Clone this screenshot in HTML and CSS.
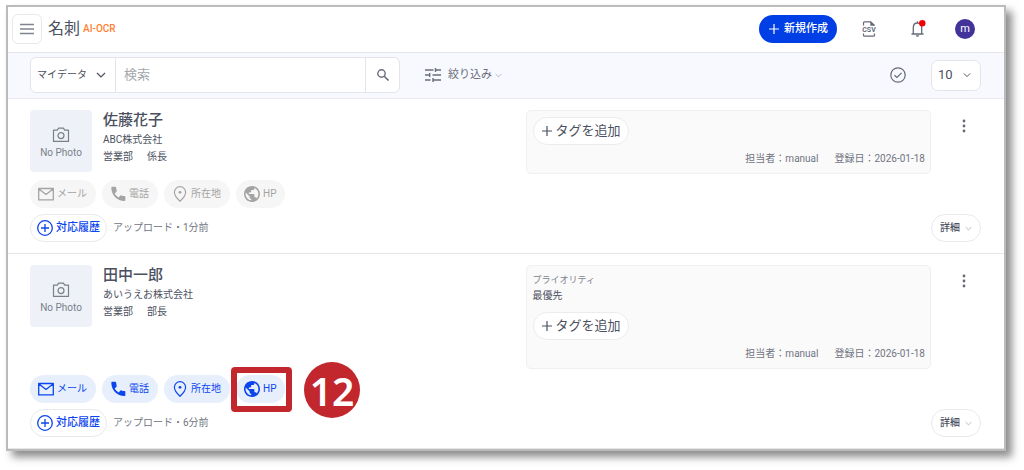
FILE: index.html
```
<!DOCTYPE html>
<html lang="ja">

<head>
    <meta charset="UTF-8">
    <meta name="viewport" content="width=device-width, initial-scale=1.0">
    <title>名刺 AI-OCR</title>
    <link rel="stylesheet" href="styles.css">
</head>

<body>
    <!-- アイコン定義 -->
    <svg class="defs" width="0" height="0" aria-hidden="true">
        <symbol id="chevron" viewBox="0 0 10 10">
            <path d="M1 3l4 4 4-4" fill="none" stroke="currentColor" stroke-width="1.2" />
        </symbol>
        <symbol id="plus" viewBox="0 0 12 12">
            <path d="M6 1v10M1 6h10" fill="none" stroke="currentColor" stroke-width="1.2" />
        </symbol>
        <symbol id="camera" viewBox="0 0 18 18">
            <path d="M1.5 4.2h3.8l1.3-2h4.8l1.3 2h3.8v11.2h-15z" fill="none" stroke="currentColor" stroke-width="1.2" stroke-linejoin="round" />
            <circle cx="9" cy="9.6" r="3" fill="none" stroke="currentColor" stroke-width="1.2" />
        </symbol>
        <symbol id="mail" viewBox="0 0 16 16">
            <path d="M.7 2.5h14.6v11.4H.7zM1 3l7 5.4L15 3" fill="none" stroke="currentColor" stroke-width="1.3" stroke-linejoin="round" />
        </symbol>
        <symbol id="phone" viewBox="0 0 24 24">
            <path d="M2 2.5C2 1.7 2.6 1 3.4 1h4.4c.8 0 1.4.6 1.4 1.4 0 1.7.3 3.2.8 4.7.1.5 0 1-.3 1.4L7.1 11.3c1.4 2.5 3.3 4.4 5.8 5.8l2.8-2.7c.4-.4.9-.5 1.400-.3 1.500.5 3 .8 4.600.8.800 0 1.300.6 1.300 1.400v4.900c0 .8-.6 1.400-1.400 1.400C10.800 22.600 2 13.400 2 2.500z" fill="currentColor" />
        </symbol>
        <symbol id="pin" viewBox="0 0 16 16">
            <path d="M8 .7a5.600 5.600 0 0 0-5.600 5.600C2.400 10.200 8 15.300 8 15.300s5.600-5.100 5.600-9A5.600 5.600 0 0 0 8 .7z" fill="none" stroke="currentColor" stroke-width="1.2" />
            <circle cx="8" cy="6.300" r="1.400" fill="currentColor" />
        </symbol>
        <symbol id="globe" viewBox="2 2 20 20">
            <path d="M12 2C6.480 2 2 6.480 2 12s4.480 10 10 10 10-4.480 10-10S17.520 2 12 2zm-1 17.930c-3.950-.49-7-3.850-7-7.930 0-.62.08-1.210.21-1.790L9 15v1c0 1.100.9 2 2 2v1.930zm6.900-2.540c-.26-.81-1-1.390-1.900-1.390h-1v-3c0-.55-.45-1-1-1H8v-2h2c.55 0 1-.45 1-1V7h2c1.100 0 2-.9 2-2v-.41c2.930 1.190 5 4.060 5 7.410 0 2.080-.8 3.970-2.100 5.390z" fill="currentColor" />
        </symbol>
        <symbol id="add-circle" viewBox="0 0 16 16">
            <circle cx="8" cy="8" r="7.3" fill="none" stroke="currentColor" stroke-width="1.3" />
            <path d="M8 4v8M4 8h8" fill="none" stroke="currentColor" stroke-width="1.3" />
        </symbol>
        <symbol id="dots" viewBox="0 0 4 14">
            <circle cx="2" cy="2" r="1.4" fill="currentColor" />
            <circle cx="2" cy="7" r="1.4" fill="currentColor" />
            <circle cx="2" cy="12" r="1.4" fill="currentColor" />
        </symbol>
    </svg>

    <div class="window">
        <header class="header">
            <button class="menu" type="button" aria-label="メニュー">
                <svg width="14" height="12" viewBox="0 0 14 12"><path d="M0 1.500h14M0 6h14M0 10.500h14" stroke="currentColor" stroke-width="1.400" /></svg>
            </button>
            <h1 class="title">名刺</h1>
            <span class="ocr">AI-OCR</span>
            <div class="actions">
                <button class="create" type="button"><svg width="12" height="12"><use href="#plus" /></svg>新規作成</button>
                <button class="icon-btn" type="button" aria-label="CSV">
                    <svg width="14" height="16" viewBox="0 0 14 16">
                        <path d="M1.500 4.500V1.800Q1.500.8 2.500.8H8.700L12.500 4.500M1.500 12.500v1.700q0 1 1 1h9q1 0 1-1V12.500" fill="none" stroke="currentColor" stroke-width="1.200" />
                        <path d="M8.300.3v4.500h4.600z" fill="currentColor" />
                        <text class="csv-text" x="7" y="11" text-anchor="middle" fill="currentColor">CSV</text>
                    </svg>
                </button>
                <button class="icon-btn" type="button" aria-label="お知らせ">
                    <svg width="16" height="18" viewBox="0 0 16 18">
                        <path d="M1.500 14h12M3.300 14V7.500C3.300 4.800 5 3 7.500 3s4.200 1.800 4.200 4.500V14M7.500 3V1.300" fill="none" stroke="currentColor" stroke-width="1.300" />
                        <path d="M5.800 15.300h3.400q-.3 1.500-1.700 1.500t-1.700-1.500z" fill="currentColor" />
                        <circle cx="12.300" cy="3.300" r="3.200" fill="#f50000" />
                    </svg>
                </button>
                <button class="avatar" type="button">m</button>
            </div>
        </header>

        <form class="toolbar">
            <div class="search">
                <div class="select scope">
                    <select aria-label="検索対象">
                        <option>マイデータ</option>
                    </select>
                    <svg width="10" height="10"><use href="#chevron" /></svg>
                </div>
                <input type="text" placeholder="検索" aria-label="検索">
                <button type="button" aria-label="検索する">
                    <svg width="12" height="12" viewBox="0 0 12 12"><circle cx="4.500" cy="4.500" r="3.700" fill="none" stroke="currentColor" stroke-width="1.400" /><path d="M7.200 7.200l4.300 4.300" stroke="currentColor" stroke-width="1.600" /></svg>
                </button>
            </div>
            <button class="filter" type="button">
                <svg width="16" height="14" viewBox="0 0 16 14"><path d="M0 2h8.500M10.500 2H16M10.500 0v4M0 7h4.700M7.500 7H16M4.700 5v4M0 12h5.500M8 12h8M8 10v4" stroke="currentColor" stroke-width="1.400" /></svg>
                絞り込み
                <svg class="pale" width="7" height="7"><use href="#chevron" /></svg>
            </button>
            <button class="check" type="button" aria-label="選択">
                <svg width="16" height="16" viewBox="0 0 16 16"><circle cx="8" cy="8" r="7.200" fill="none" stroke="currentColor" stroke-width="1.200" /><path d="M4.500 8.200l2.400 2.300 4.700-4.700" fill="none" stroke="currentColor" stroke-width="1.200" /></svg>
            </button>
            <div class="select count">
                <select aria-label="表示件数">
                    <option>10</option>
                </select>
                <svg width="8" height="8"><use href="#chevron" /></svg>
            </div>
        </form>

        <main>
            <article class="card">
                <div class="card-top">
                    <div class="person">
                        <div class="photo"><svg width="18" height="18"><use href="#camera" /></svg>No Photo</div>
                        <div>
                            <h2 class="name">佐藤花子</h2>
                            <p>ABC株式会社</p>
                            <p><span class="dept">営業部</span>係長</p>
                        </div>
                    </div>
                    <div class="info">
                        <button class="tag" type="button"><svg width="12" height="12"><use href="#plus" /></svg>タグを追加</button>
                        <div class="meta"><span>担当者：manual</span><span>登録日：2026-01-18</span></div>
                    </div>
                    <button class="more" type="button" aria-label="その他"><svg width="4" height="14"><use href="#dots" /></svg></button>
                </div>
                <div class="links">
                    <button class="pill" type="button" disabled><svg width="16" height="16"><use href="#mail" /></svg>メール</button>
                    <button class="pill" type="button" disabled><svg width="16" height="16"><use href="#phone" /></svg>電話</button>
                    <button class="pill" type="button" disabled><svg width="16" height="16"><use href="#pin" /></svg>所在地</button>
                    <button class="pill" type="button" disabled><svg width="16" height="16"><use href="#globe" /></svg>HP</button>
                </div>
                <div class="card-bottom">
                    <button class="history" type="button"><svg width="16" height="16"><use href="#add-circle" /></svg>対応履歴</button>
                    <span class="upload">アップロード・1分前</span>
                    <button class="detail" type="button">詳細<svg class="pale" width="7" height="7"><use href="#chevron" /></svg></button>
                </div>
            </article>

            <article class="card">
                <div class="card-top">
                    <div class="person">
                        <div class="photo"><svg width="18" height="18"><use href="#camera" /></svg>No Photo</div>
                        <div>
                            <h2 class="name">田中一郎</h2>
                            <p>あいうえお株式会社</p>
                            <p><span class="dept">営業部</span>部長</p>
                        </div>
                    </div>
                    <div class="info">
                        <dl class="priority">
                            <dt>プライオリティ</dt>
                            <dd>最優先</dd>
                        </dl>
                        <button class="tag" type="button"><svg width="12" height="12"><use href="#plus" /></svg>タグを追加</button>
                        <div class="meta"><span>担当者：manual</span><span>登録日：2026-01-18</span></div>
                    </div>
                    <button class="more" type="button" aria-label="その他"><svg width="4" height="14"><use href="#dots" /></svg></button>
                </div>
                <div class="links">
                    <a class="pill" href="#mail"><svg width="16" height="16"><use href="#mail" /></svg>メール</a>
                    <a class="pill" href="#phone"><svg width="16" height="16"><use href="#phone" /></svg>電話</a>
                    <a class="pill" href="#pin"><svg width="16" height="16"><use href="#pin" /></svg>所在地</a>
                    <div class="callout">
                        <a class="pill" href="#globe"><svg width="16" height="16"><use href="#globe" /></svg>HP</a>
                        <span class="frame"></span>
                        <span class="step">12</span>
                    </div>
                </div>
                <div class="card-bottom">
                    <button class="history" type="button"><svg width="16" height="16"><use href="#add-circle" /></svg>対応履歴</button>
                    <span class="upload">アップロード・6分前</span>
                    <button class="detail" type="button">詳細<svg class="pale" width="7" height="7"><use href="#chevron" /></svg></button>
                </div>
            </article>
        </main>
    </div>
</body>

</html>
```
FILE: styles.css
```
* {
    box-sizing: border-box;
}

body {
    margin: 0;
    background: #fff;
    color: #4b5060;
    font-family: Roboto, "Noto Sans CJK JP", sans-serif;
    font-size: 10px;
    line-height: 16px;
}

h1, h2, p, dl, dd {
    margin: 0;
}

button, input, select {
    margin: 0;
    padding: 0;
    border: 0;
    background: none;
    color: inherit;
    font: inherit;
}

svg {
    display: block;
    flex: none;
}

.defs {
    position: absolute;
}

.window {
    margin: 5px 18px 18px 6px;
    border: 2px solid #bbb;
    background: #fff;
    box-shadow: 6px 6px 8px rgba(0, 0, 0, 0.45);
}

/* ヘッダー */
.header {
    display: flex;
    align-items: center;
    padding: 7px 29px 8px 4px;
    border-bottom: 1px solid #e6e7eb;
}

.menu {
    display: grid;
    place-items: center;
    width: 30px;
    height: 30px;
    border: 1px solid #e8e8ea;
    border-radius: 6px;
    color: #808490;
}

.title {
    margin: 0 3px 0 6px;
    font-size: 16px;
    font-weight: 400;
    line-height: 24px;
}

.ocr {
    color: #ff7f32;
    font-weight: 500;
}

.actions {
    display: flex;
    align-items: center;
    margin-left: auto;
}

.create {
    display: flex;
    align-items: center;
    gap: 4px;
    height: 28px;
    margin-right: 20px;
    padding: 0 9px;
    border-radius: 14px;
    background: #003ee6;
    color: #fff;
    font-size: 11px;
    font-weight: 500;
}

.icon-btn {
    display: grid;
    place-items: center;
    width: 24px;
    height: 24px;
    margin-right: 25px;
    color: #656a77;
}

.csv-text {
    font-size: 7px;
    font-weight: 700;
}

.avatar {
    width: 20px;
    height: 20px;
    border-radius: 50%;
    background: #42339b;
    color: #fff;
    font-size: 11px;
    line-height: 20px;
}

/* 検索バー */
.toolbar {
    display: flex;
    align-items: center;
    padding: 4px 23px 5px 22px;
    border-bottom: 1px solid #ebecf0;
    background: #f8f9fe;
}

.search {
    display: flex;
    width: 370px;
    height: 36px;
    border: 1px solid #e4e5e9;
    border-radius: 6px;
    background: #fff;
}

.select {
    display: grid;
    align-items: center;
}

.select select,
.select svg {
    grid-area: 1 / 1;
}

.select select {
    width: 100%;
    height: 100%;
    appearance: none;
}

.select svg {
    justify-self: end;
    margin-right: 9px;
    pointer-events: none;
}

.scope {
    width: 85px;
    border-right: 1px solid #e4e5e9;
}

.scope select {
    padding-left: 6px;
}

.search input {
    flex: 1;
    min-width: 0;
    padding: 0 8px;
    font-size: 13px;
}

.search input::placeholder {
    color: #a5a7ad;
}

.search button {
    display: grid;
    place-items: center;
    width: 34px;
    border-left: 1px solid #e4e5e9;
    color: #686d7b;
}

.filter {
    display: flex;
    align-items: center;
    margin-left: 25px;
    gap: 3px;
    color: #686d7b;
    font-size: 11px;
}

.filter svg:first-child {
    margin-right: 4px;
}

.pale {
    color: #a9aec0;
}

.check {
    margin: 0 25px 0 auto;
    color: #656a77;
}

.count {
    width: 50px;
    height: 31px;
    border: 1px solid #e4e5e9;
    border-radius: 7px;
    background: #fff;
    font-size: 13px;
}

.count select {
    padding-left: 6px;
}

/* 名刺カード */
.card {
    padding: 11px 23px 11px 22px;
    border-bottom: 1px solid #e6e7e9;
}

.card-top {
    display: grid;
    grid-template-columns: 11fr 9fr 50px;
    align-items: start;
}

.person {
    display: flex;
    gap: 11px;
    line-height: 17px;
}

.photo {
    display: flex;
    flex-direction: column;
    align-items: center;
    justify-content: center;
    width: 62px;
    height: 62px;
    padding-top: 6px;
    border-radius: 4px;
    background: #eef2f8;
    color: #7b7f8b;
    line-height: 18px;
}

.name {
    margin-bottom: 1px;
    font-size: 15px;
    font-weight: 500;
    line-height: 20px;
}

.dept {
    margin-right: 14px;
}

.info {
    padding: 6px 5px 6px 6px;
    border: 1px solid #f0f0f1;
    border-radius: 5px;
    background: #fafafa;
}

.priority {
    margin-bottom: 8px;
}

.priority dt {
    color: #7b7f8b;
    font-size: 9px;
}

.tag {
    display: flex;
    align-items: center;
    gap: 3px;
    height: 28px;
    padding: 0 7px;
    border: 1px solid #ececee;
    border-radius: 14px;
    background: #fff;
    font-size: 13px;
}

.meta {
    display: flex;
    justify-content: flex-end;
    gap: 16px;
    margin-top: 6px;
    color: #717582;
}

.more {
    display: grid;
    place-items: center;
    width: 34px;
    height: 32px;
    margin-left: auto;
    color: #656a77;
}

.links {
    display: flex;
    gap: 6px;
    margin: 6px 0;
}

.pill {
    display: flex;
    align-items: center;
    gap: 3px;
    height: 28px;
    padding: 0 9px 0 8px;
    border-radius: 14px;
    background: #e7effd;
    color: #0b45ee;
    text-decoration: none;
}

.pill:disabled {
    background: #f6f6f6;
    color: #a4a4a4;
}

.callout {
    position: relative;
}

/* 手順の注釈 */
.frame {
    position: absolute;
    inset: -8px -7px -9px -5px;
    border: 6px solid #c1272d;
    border-radius: 4px;
}

.step {
    position: absolute;
    top: -13px;
    left: 68px;
    width: 56px;
    height: 56px;
    border-radius: 50%;
    background: #c1272d;
    color: #fff;
    font-family: "Noto Sans", sans-serif;
    font-size: 39px;
    font-weight: 600;
    line-height: 58px;
    text-align: center;
}

.card-bottom {
    display: flex;
    align-items: center;
    gap: 6px;
}

.history,
.detail {
    display: flex;
    align-items: center;
    height: 28px;
    border: 1px solid #e8e9ec;
    border-radius: 14px;
    background: #fff;
}

.history {
    gap: 3px;
    padding: 0 6px;
    color: #0b45ee;
    font-size: 11px;
    font-weight: 500;
}

.upload {
    color: #717582;
}

.detail {
    gap: 5px;
    margin-left: auto;
    padding: 0 8px;
    font-weight: 500;
}
```
